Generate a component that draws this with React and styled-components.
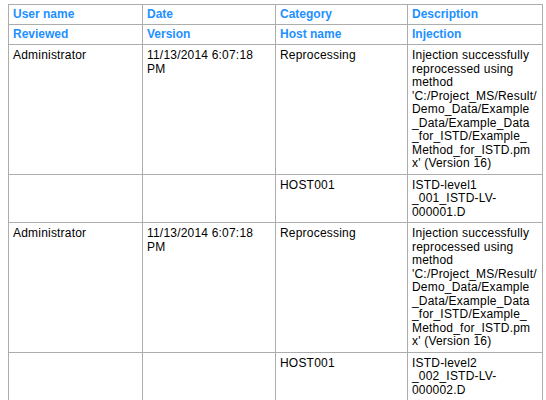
import React from 'react'
import styled, { createGlobalStyle } from 'styled-components';

const GlobalStyle = createGlobalStyle`
  body{
    margin:0;
    background:#fff;
    font-family:"Liberation Sans", Arial, sans-serif;
  }
`;

const columns = [134, 133, 132, 135];

const headers = [
  ['User name', 'Date', 'Category', 'Description'],
  ['Reviewed', 'Version', 'Host name', 'Injection'],
];

const entries = [
  {
    user: 'Administrator',
    date: '11/13/2014 6:07:18\nPM',
    category: 'Reprocessing',
    description: "Injection successfully\nreprocessed using\nmethod\n'C:/Project_MS/Result/\nDemo_Data/Example\n_Data/Example_Data\n_for_ISTD/Example_\nMethod_for_ISTD.pm\nx' (Version 16)",
    reviewed: '',
    version: '',
    host: 'HOST001',
    injection: 'ISTD-level1\n_001_ISTD-LV-\n000001.D',
  },
  {
    user: 'Administrator',
    date: '11/13/2014 6:07:18\nPM',
    category: 'Reprocessing',
    description: "Injection successfully\nreprocessed using\nmethod\n'C:/Project_MS/Result/\nDemo_Data/Example\n_Data/Example_Data\n_for_ISTD/Example_\nMethod_for_ISTD.pm\nx' (Version 16)",
    reviewed: '',
    version: '',
    host: 'HOST001',
    injection: 'ISTD-level2\n_002_ISTD-LV-\n000002.D',
  },
];

const AuditTable = () => {
  return (
    <>
      <GlobalStyle />
      <Wrapper>
        <Table>
          <colgroup>
            {columns.map((w, i) => <col key={i} width={w} />)}
          </colgroup>
          <thead>
            {headers.map((row, i) => (
              <tr key={i}>
                {row.map((h) => <HeadCell key={h}>{h}</HeadCell>)}
              </tr>
            ))}
          </thead>
          <tbody>
            {entries.map((e, i) => (
              <React.Fragment key={i}>
                <tr>
                  <Cell>{e.user}</Cell>
                  <Cell>{e.date}</Cell>
                  <Cell>{e.category}</Cell>
                  <Cell>{e.description}</Cell>
                </tr>
                <tr>
                  <Cell>{e.reviewed}</Cell>
                  <Cell>{e.version}</Cell>
                  <Cell>{e.host}</Cell>
                  <Cell>{e.injection}</Cell>
                </tr>
              </React.Fragment>
            ))}
          </tbody>
        </Table>
      </Wrapper>
    </>
  )
}

const Wrapper = styled.div`
    padding:4px 0 0 8px;
`;

const Table = styled.table`
    width:535px;
    table-layout:fixed;
    border-collapse:collapse;
`;

const HeadCell = styled.th`
    border:1px solid #adadad;
    padding:3px 2px 3px 4px;
    text-align:left;
    font-size:12px;
    font-weight:700;
    line-height:13px;
    color:#1e90ff;
    white-space:nowrap;
`;

const Cell = styled.td`
    border:1px solid #adadad;
    padding:4px 2px 3px 4px;
    vertical-align:top;
    font-size:12px;
    letter-spacing:0.2px;
    line-height:13.5px;
    color:#000;
    white-space:pre-line;
    overflow-wrap:anywhere;
`;

export default AuditTable
